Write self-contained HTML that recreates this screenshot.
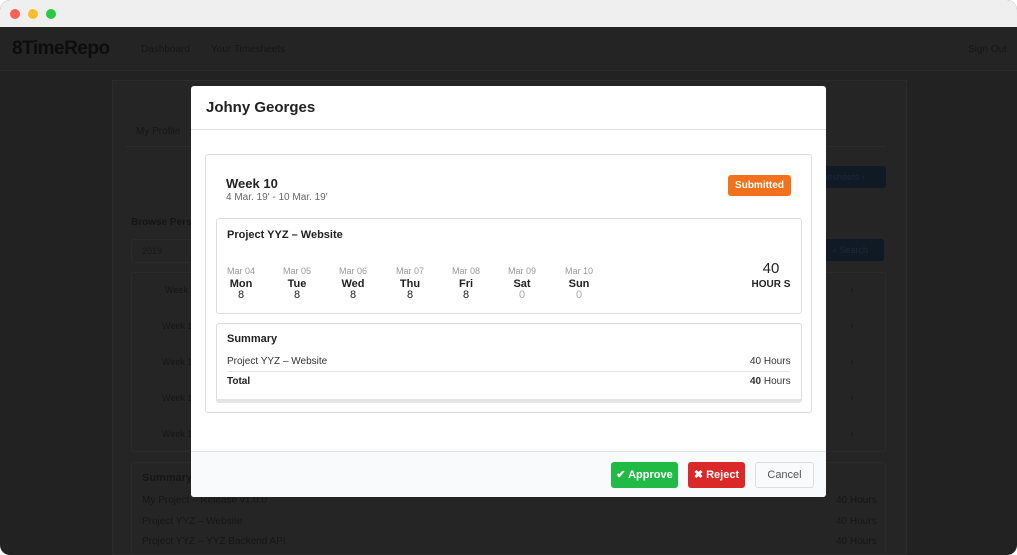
<!DOCTYPE html>
<html><head><meta charset="utf-8"><style>
*{box-sizing:border-box;margin:0;padding:0}
body{width:1017px;height:555px;overflow:hidden;background:#fff;font-family:"Liberation Sans",sans-serif;position:relative}
.a{position:absolute}
.win{left:0;top:0;width:1017px;height:555px;border-radius:10px;overflow:hidden;background:#222}
.bar{left:0;top:0;width:1017px;height:27px;background:#efefef}
.dot{top:9px;width:10px;height:10px;border-radius:50%}
.dim{color:#161616;font-size:11px}
.m{left:191px;top:86px;width:635px;height:411px;background:#fff;border-radius:3px;overflow:hidden}
.card{border:1px solid #ddd;border-radius:3px;background:#fff}
.day{width:40px;text-align:center;font-size:11px;color:#222;line-height:11px}
.day .d{font-size:9px;color:#999;margin-bottom:2px}
.day b{display:block}
.btn{height:26px;border-radius:3px;font-size:11px;font-weight:bold;color:#fff;text-align:center;line-height:26px}
</style></head><body>
<div class="a win">
 <div class="a bar"></div>
 <div class="a dot" style="left:10px;background:#fe5f57"></div>
 <div class="a dot" style="left:28px;background:#febc2e"></div>
 <div class="a dot" style="left:46px;background:#28c840"></div>
 <div class="a" style="left:0;top:27px;width:1017px;height:44px;background:#242424;border-bottom:1px solid #2b2b2b"></div>
 <div class="a" style="left:12px;top:38px;font-size:19px;font-weight:bold;color:#0d0d0d;letter-spacing:-0.5px">8TimeRepo</div>
 <div class="a dim" style="left:141px;top:44px;font-size:10px">Dashboard</div>
 <div class="a dim" style="left:211px;top:44px;font-size:10px">Your Timesheets</div>
 <div class="a dim" style="left:968px;top:44px;font-size:10px">Sign Out</div>
 <div class="a" style="left:112px;top:80px;width:795px;height:475px;background:#252525;border:1px solid #2b2b2b"></div>
 <div class="a dim" style="left:136px;top:126px;font-size:10px">My Profile</div>
 <div class="a" style="left:126px;top:146px;width:760px;height:1px;background:#2c2c2c"></div>
 <div class="a" style="left:790px;top:166px;width:96px;height:22px;background:#0f1a24;border-radius:3px;color:#1c2a38;font-size:9px;line-height:22px;padding-left:30px">mesheets ›</div>
 <div class="a dim" style="left:131px;top:217px;font-weight:bold;font-size:10px">Browse Pers</div>
 <div class="a" style="left:131px;top:239px;width:80px;height:24px;border:1px solid #2b2b2b;border-radius:3px;color:#181818;font-size:9px;line-height:22px;padding-left:10px">2019</div>
 <div class="a" style="left:820px;top:239px;width:64px;height:22px;background:#0f1a24;border-radius:3px;color:#1c2a38;font-size:9px;line-height:22px;padding-left:12px">⌕ Search</div>
 <div class="a" style="left:131px;top:272px;width:755px;height:180px;border:1px solid #2b2b2b;border-radius:3px"></div>
 <div class="a dim" style="left:165px;top:285px;font-size:9px">Week</div>
 <div class="a dim" style="left:162px;top:321px;font-size:9px">Week 1</div>
 <div class="a dim" style="left:162px;top:357px;font-size:9px">Week 1</div>
 <div class="a dim" style="left:162px;top:393px;font-size:9px">Week 1</div>
 <div class="a dim" style="left:162px;top:429px;font-size:9px">Week 1</div>
 <div class="a dim" style="left:850px;top:284px">›</div>
 <div class="a dim" style="left:850px;top:320px">›</div>
 <div class="a dim" style="left:850px;top:356px">›</div>
 <div class="a dim" style="left:850px;top:392px">›</div>
 <div class="a dim" style="left:850px;top:428px">›</div>
 <div class="a" style="left:131px;top:462px;width:755px;height:93px;border:1px solid #2b2b2b;border-radius:3px"></div>
 <div class="a dim" style="left:142px;top:472px;font-weight:bold;font-size:11px">Summary</div>
 <div class="a dim" style="left:142px;top:495px;font-size:10px">My Project – Release v1.0.0</div>
 <div class="a dim" style="left:142px;top:516px;font-size:10px">Project YYZ – Website</div>
 <div class="a dim" style="left:142px;top:536px;font-size:10px">Project YYZ – YYZ Backend API</div>
 <div class="a dim" style="left:836px;top:495px;font-size:10px">40 Hours</div>
 <div class="a dim" style="left:836px;top:516px;font-size:10px">40 Hours</div>
 <div class="a dim" style="left:836px;top:536px;font-size:10px">40 Hours</div>

 <div class="a m">
  <div class="a" style="left:15px;top:13px;font-size:15px;font-weight:bold;color:#222">Johny Georges</div>
  <div class="a" style="left:0;top:43px;width:635px;height:1px;background:#e2e2e2"></div>
  <div class="a card" style="left:14px;top:68px;width:607px;height:259px"></div>
  <div class="a" style="left:35px;top:90px;font-size:13px;font-weight:bold;color:#222">Week 10</div>
  <div class="a" style="left:35px;top:106px;font-size:10px;color:#666">4 Mar. 19' - 10 Mar. 19'</div>
  <div class="a btn" style="left:537px;top:89px;width:63px;height:21px;line-height:21px;background:#f2711c;font-size:10px">Submitted</div>
  <div class="a card" style="left:25px;top:132px;width:586px;height:96px"></div>
  <div class="a" style="left:36px;top:143px;font-size:11px;font-weight:bold;color:#222">Project YYZ – Website</div>
  <div class="a day" style="left:30px;top:180px"><div class="d">Mar 04</div><b>Mon</b>8</div>
  <div class="a day" style="left:86px;top:180px"><div class="d">Mar 05</div><b>Tue</b>8</div>
  <div class="a day" style="left:142px;top:180px"><div class="d">Mar 06</div><b>Wed</b>8</div>
  <div class="a day" style="left:199px;top:180px"><div class="d">Mar 07</div><b>Thu</b>8</div>
  <div class="a day" style="left:255px;top:180px"><div class="d">Mar 08</div><b>Fri</b>8</div>
  <div class="a day" style="left:311px;top:180px"><div class="d">Mar 09</div><b>Sat</b><span style="color:#aaa">0</span></div>
  <div class="a day" style="left:368px;top:180px"><div class="d">Mar 10</div><b>Sun</b><span style="color:#aaa">0</span></div>
  <div class="a" style="left:555px;top:176px;width:50px;text-align:center;font-size:15px;color:#222;line-height:14px">40<br><b style="font-size:10px">HOUR S</b></div>
  <div class="a card" style="left:25px;top:237px;width:586px;height:80px;border-bottom:4px solid #e5e5e5"></div>
  <div class="a" style="left:36px;top:247px;font-size:11px;font-weight:bold;color:#222">Summary</div>
  <div class="a" style="left:36px;top:270px;font-size:10px;color:#333">Project YYZ – Website</div>
  <div class="a" style="left:559px;top:270px;font-size:10px;color:#333">40 Hours</div>
  <div class="a" style="left:36px;top:285px;width:563px;height:1px;background:#e5e5e5"></div>
  <div class="a" style="left:36px;top:290px;font-size:10px;color:#222;font-weight:bold">Total</div>
  <div class="a" style="left:559px;top:290px;font-size:10px;color:#333"><b>40</b> Hours</div>
  <div class="a" style="left:0;top:365px;width:635px;height:46px;background:#f9fafb;border-top:1px solid #e2e2e2"></div>
  <div class="a btn" style="left:420px;top:376px;width:67px;background:#21ba45">✔ Approve</div>
  <div class="a btn" style="left:497px;top:376px;width:57px;background:#db2828">✖ Reject</div>
  <div class="a btn" style="left:564px;top:376px;width:59px;background:#f9fafb;border:1px solid #ddd;color:#555;font-weight:normal;line-height:24px">Cancel</div>
 </div>
</div>
</body></html>
